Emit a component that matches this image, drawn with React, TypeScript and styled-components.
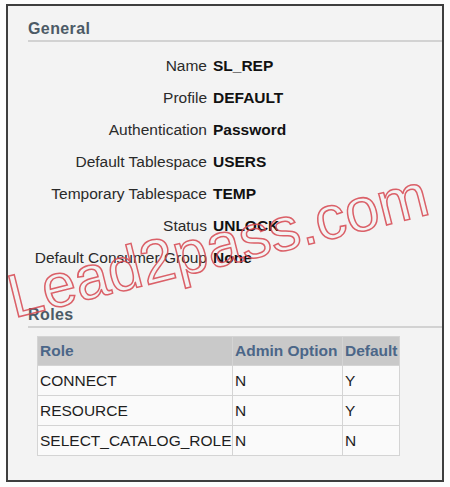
import styled, { createGlobalStyle } from "styled-components";

const GlobalStyle = createGlobalStyle`
  html, body {
    margin: 0;
    padding: 0;
    background: #fdfdfd;
  }
  body {
    font-family: "Liberation Sans", Arial, Helvetica, sans-serif;
  }
`;

interface Field {
  label: string;
  value: string;
}

interface Role {
  name: string;
  admin: string;
  isDefault: string;
}

const fields: Field[] = [
  { label: "Name", value: "SL_REP" },
  { label: "Profile", value: "DEFAULT" },
  { label: "Authentication", value: "Password" },
  { label: "Default Tablespace", value: "USERS" },
  { label: "Temporary Tablespace", value: "TEMP" },
  { label: "Status", value: "UNLOCK" },
  { label: "Default Consumer Group", value: "None" },
];

const roles: Role[] = [
  { name: "CONNECT", admin: "N", isDefault: "Y" },
  { name: "RESOURCE", admin: "N", isDefault: "Y" },
  { name: "SELECT_CATALOG_ROLE", admin: "N", isDefault: "N" },
];

export default function App() {
  return (
    <Page>
      <GlobalStyle />
      <Frame>
        <SectionTitle>General</SectionTitle>
        <FieldGrid>
          {fields.map((f) => (
            <FieldRow key={f.label}>
              <FieldLabel>{f.label}</FieldLabel>
              <FieldValue>{f.value}</FieldValue>
            </FieldRow>
          ))}
        </FieldGrid>
        <SectionTitle $spaced>Roles</SectionTitle>
        <RoleTable>
          <colgroup>
            <col style={{ width: 195 }} />
            <col style={{ width: 110 }} />
            <col style={{ width: 57 }} />
          </colgroup>
          <thead>
            <tr>
              <HeadCell>Role</HeadCell>
              <HeadCell>Admin Option</HeadCell>
              <HeadCell>Default</HeadCell>
            </tr>
          </thead>
          <tbody>
            {roles.map((r) => (
              <tr key={r.name}>
                <Cell>{r.name}</Cell>
                <Cell>{r.admin}</Cell>
                <Cell>{r.isDefault}</Cell>
              </tr>
            ))}
          </tbody>
        </RoleTable>
      </Frame>
      <Watermark viewBox="0 0 450 487" width={450} height={487}>
        <text
          x={14}
          y={318}
          transform="rotate(-14 14 318)"
          fontFamily="'Liberation Sans', Arial, sans-serif"
          fontSize={61}
          fill="none"
          stroke="#d6454f"
          strokeWidth={1.5}
          strokeOpacity={0.85}
        >
          Lead2pass.com
        </text>
      </Watermark>
    </Page>
  );
}

const Page = styled.div`
  position: relative;
  width: 450px;
  height: 487px;
  overflow: hidden;
`;

const Frame = styled.div`
  box-sizing: border-box;
  margin: 4px 0 0 6px;
  width: 438px;
  height: 478px;
  border: 2px solid #3e3e3e;
  background: #f3f3f3;
  padding-top: 14px;
`;

const SectionTitle = styled.div<{ $spaced?: boolean }>`
  margin: ${(p) => (p.$spaced ? "32px" : "0")} 0 0 20px;
  padding-bottom: 2px;
  border-bottom: 2px solid #d2d2d2;
  font-size: 16px;
  line-height: 18px;
  font-weight: bold;
  letter-spacing: 0.4px;
  color: #4c5a66;
`;

const FieldGrid = styled.div`
  display: flex;
  flex-direction: column;
  margin-top: 8px;
`;

const FieldRow = styled.div`
  display: grid;
  grid-template-columns: 199px auto;
  column-gap: 6px;
  height: 32px;
  line-height: 32px;
  font-size: 15.5px;
`;

const FieldLabel = styled.span`
  text-align: right;
  color: #2a2a2a;
  white-space: nowrap;
`;

const FieldValue = styled.span`
  font-weight: bold;
  color: #111;
`;

const RoleTable = styled.table`
  margin: 8px 0 0 29px;
  border-collapse: collapse;
  table-layout: fixed;
  width: 362px;
  font-size: 15.5px;
`;

const HeadCell = styled.th`
  height: 28px;
  padding: 0 2px;
  text-align: left;
  background: #c9c9c9;
  color: #4b6688;
  font-weight: bold;
  border: 1px solid #d4d4d4;
  white-space: nowrap;
`;

const Cell = styled.td`
  height: 29px;
  padding: 0 2px;
  background: #fafafa;
  color: #1e1e1e;
  border: 1px solid #d4d4d4;
  white-space: nowrap;
  overflow: hidden;
`;

const Watermark = styled.svg`
  position: absolute;
  top: 0;
  left: 0;
  pointer-events: none;
`;
